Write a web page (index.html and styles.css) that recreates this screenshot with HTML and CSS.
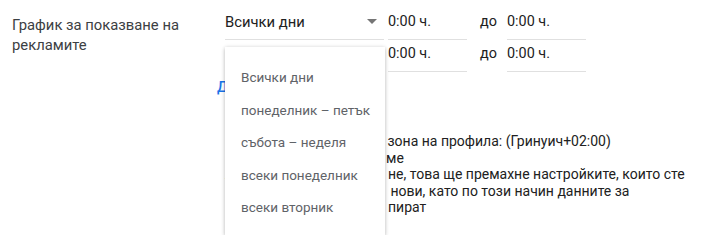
FILE: index.html
```html
<html>

<head>
    <title>График за показване на рекламите</title>
    <link rel="stylesheet" href="styles.css">
</head>

<body>
    <div class="setting">
        <div class="setting-label">График за показване на рекламите</div>
        <div class="setting-body">
            <div class="schedule-row">
                <div class="day-select">
                    <span class="day-select-value">Всички дни</span>
                    <span class="day-select-arrow"></span>
                </div>
                <div class="time-field">0:00 ч.</div>
                <div class="time-sep">до</div>
                <div class="time-field">0:00 ч.</div>
            </div>
            <div class="schedule-row">
                <div class="day-select">
                    <span class="day-select-value">Всички дни</span>
                    <span class="day-select-arrow"></span>
                </div>
                <div class="time-field">0:00 ч.</div>
                <div class="time-sep">до</div>
                <div class="time-field">0:00 ч.</div>
            </div>
            <div class="add-link">Добавяне</div>
            <div class="note">
                <div class="note-line"><span class="note-hidden">Според часовата</span> зона на профила: (Гринуич+02:00)</div>
                <div class="note-line"><span class="note-hidden">Научете повече</span>ме</div>
                <div class="note-line"><span class="note-hidden">Ако ги промени</span>не, това ще премахне настройките, които сте</div>
                <div class="note-line"><span class="note-hidden">задали, и ще ги</span> нови, като по този начин данните за</div>
                <div class="note-line"><span class="note-hidden">ефективността</span>пират</div>
            </div>

            <div class="day-menu">
                <div class="day-menu-item">Всички дни</div>
                <div class="day-menu-item">понеделник – петък</div>
                <div class="day-menu-item">събота – неделя</div>
                <div class="day-menu-item">всеки понеделник</div>
                <div class="day-menu-item">всеки вторник</div>
            </div>
        </div>
    </div>
</body>

</html>
```

FILE: styles.css
```css
body {
    margin: 0;
    font-family: Roboto, Arial, sans-serif;
    color: #212121;
    background: #fff;
    height: 235px;
    overflow: hidden;
}

.setting {
    display: flex;
    padding-left: 12px;
}

.setting-label {
    width: 180px;
    padding-top: 15px;
    font-size: 14.8px;
    line-height: 20px;
    color: #3c4043;
}

.setting-body {
    position: relative;
    margin-left: 33px;
    padding-top: 8px;
}

.schedule-row {
    display: flex;
    align-items: flex-end;
    height: 32px;
}

.day-select {
    display: flex;
    align-items: center;
    width: 159px;
    height: 28px;
    padding-bottom: 8px;
    box-sizing: border-box;
    border-bottom: 1px solid #e0e0e0;
    font-size: 14.8px;
}

.day-select-value {
    flex: 1;
}

.day-select-arrow {
    width: 0;
    height: 0;
    border-left: 5px solid transparent;
    border-right: 5px solid transparent;
    border-top: 5px solid #757575;
    margin-right: 7px;
}

.time-field {
    width: 79px;
    height: 28px;
    line-height: 20px;
    padding-bottom: 8px;
    box-sizing: border-box;
    margin-left: 4px;
    border-bottom: 1px solid #e0e0e0;
    font-size: 14.4px;
}

.time-sep {
    width: 40px;
    height: 28px;
    line-height: 20px;
    padding: 0 0 8px 13px;
    box-sizing: border-box;
    font-size: 14.4px;
}

.time-sep + .time-field {
    margin-left: 0;
}

.add-link {
    margin: 6px 0 0 -8px;
    font-size: 14.4px;
    font-weight: 500;
    color: #1a73e8;
    line-height: 20px;
}

.note {
    margin-top: 35px;
    font-size: 14px;
    line-height: 16.5px;
    color: #212121;
}

.note-line {
    white-space: nowrap;
}

.note-hidden {
    display: inline-block;
    vertical-align: top;
    width: 159px;
}

.note-line:nth-child(2) .note-hidden {
    width: 161px;
}

.note-line:nth-child(3) .note-hidden,
.note-line:nth-child(5) .note-hidden {
    width: 163px;
}

.note-line:nth-child(4) .note-hidden {
    width: 162px;
}

.day-menu {
    position: absolute;
    left: 0;
    top: 47px;
    width: 160px;
    height: 188px;
    padding-top: 14px;
    box-sizing: border-box;
    background: #fff;
    box-shadow: 0 2px 4px rgba(0, 0, 0, 0.2), 0 0 4px rgba(0, 0, 0, 0.12);
}

.day-menu-item {
    height: 32.5px;
    line-height: 32.5px;
    padding-left: 16px;
    font-size: 13.5px;
    color: #5f6368;
    white-space: nowrap;
}
```
